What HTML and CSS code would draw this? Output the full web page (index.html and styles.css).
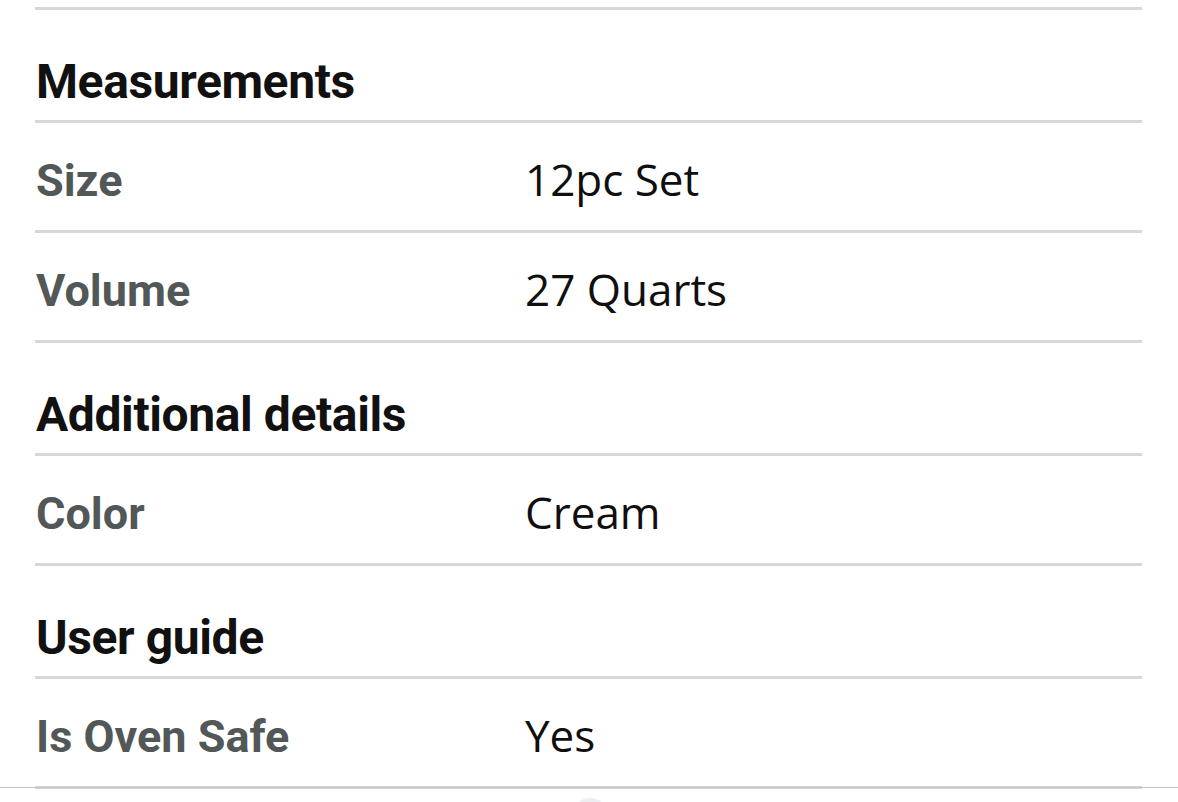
FILE: index.html
```html
<!DOCTYPE html>
<html lang="en">
<head>
<meta charset="utf-8">
<title>Specifications</title>
<link rel="stylesheet" href="styles.css">
</head>
<body>
<div class="page">
  <div class="specs">
    <div class="rule"></div>
    <section class="group">
      <h2 class="group-title">Measurements</h2>
      <div class="row"><span class="label">Size</span><span class="value">12pc Set</span></div>
      <div class="row"><span class="label">Volume</span><span class="value">27 Quarts</span></div>
    </section>
    <section class="group">
      <h2 class="group-title">Additional details</h2>
      <div class="row"><span class="label">Color</span><span class="value">Cream</span></div>
    </section>
    <section class="group">
      <h2 class="group-title">User guide</h2>
      <div class="row"><span class="label">Is Oven Safe</span><span class="value">Yes</span></div>
    </section>
  </div>
  <div class="bottom-edge"></div>
  <div class="scroll-knob"></div>
</div>
</body>
</html>
```

FILE: styles.css
```css
html, body {
  margin: 0;
  padding: 0;
  background: #ffffff;
}

.page {
  position: relative;
  width: 1178px;
  height: 802px;
  overflow: hidden;
}

.specs {
  padding: 7px 36px 0 35px;
}

.rule {
  height: 3px;
  background: #d6d7d7;
}

.group-title {
  margin: 0;
  height: 113px;
  box-sizing: border-box;
  padding: 44px 0 0 1px;
  border-bottom: 3px solid #d6d7d7;
  font-family: Roboto, "Liberation Sans", sans-serif;
  font-weight: 700;
  font-size: 48px;
  line-height: 56px;
  color: #111111;
  letter-spacing: -0.4px;
}

.row {
  display: grid;
  grid-template-columns: 490px 1fr;
  align-items: baseline;
  height: 110px;
  box-sizing: border-box;
  padding-top: 28px;
  border-bottom: 3px solid #d6d7d7;
}

.label {
  padding-left: 1px;
  font-family: Roboto, "Liberation Sans", sans-serif;
  font-weight: 700;
  font-size: 45px;
  line-height: 56px;
  color: #525757;
}

.value {
  font-family: "Open Sans", "Noto Sans", sans-serif;
  font-weight: 400;
  font-size: 44px;
  line-height: 56px;
  color: #0f0f0f;
}

.bottom-edge {
  height: 0;
  margin-top: -2px;
  border-top: 1px solid #c4c4c4;
}

.scroll-knob {
  position: absolute;
  left: 572px;
  top: 798px;
  width: 36px;
  height: 36px;
  border-radius: 50%;
  background: #eceef2;
}
```
